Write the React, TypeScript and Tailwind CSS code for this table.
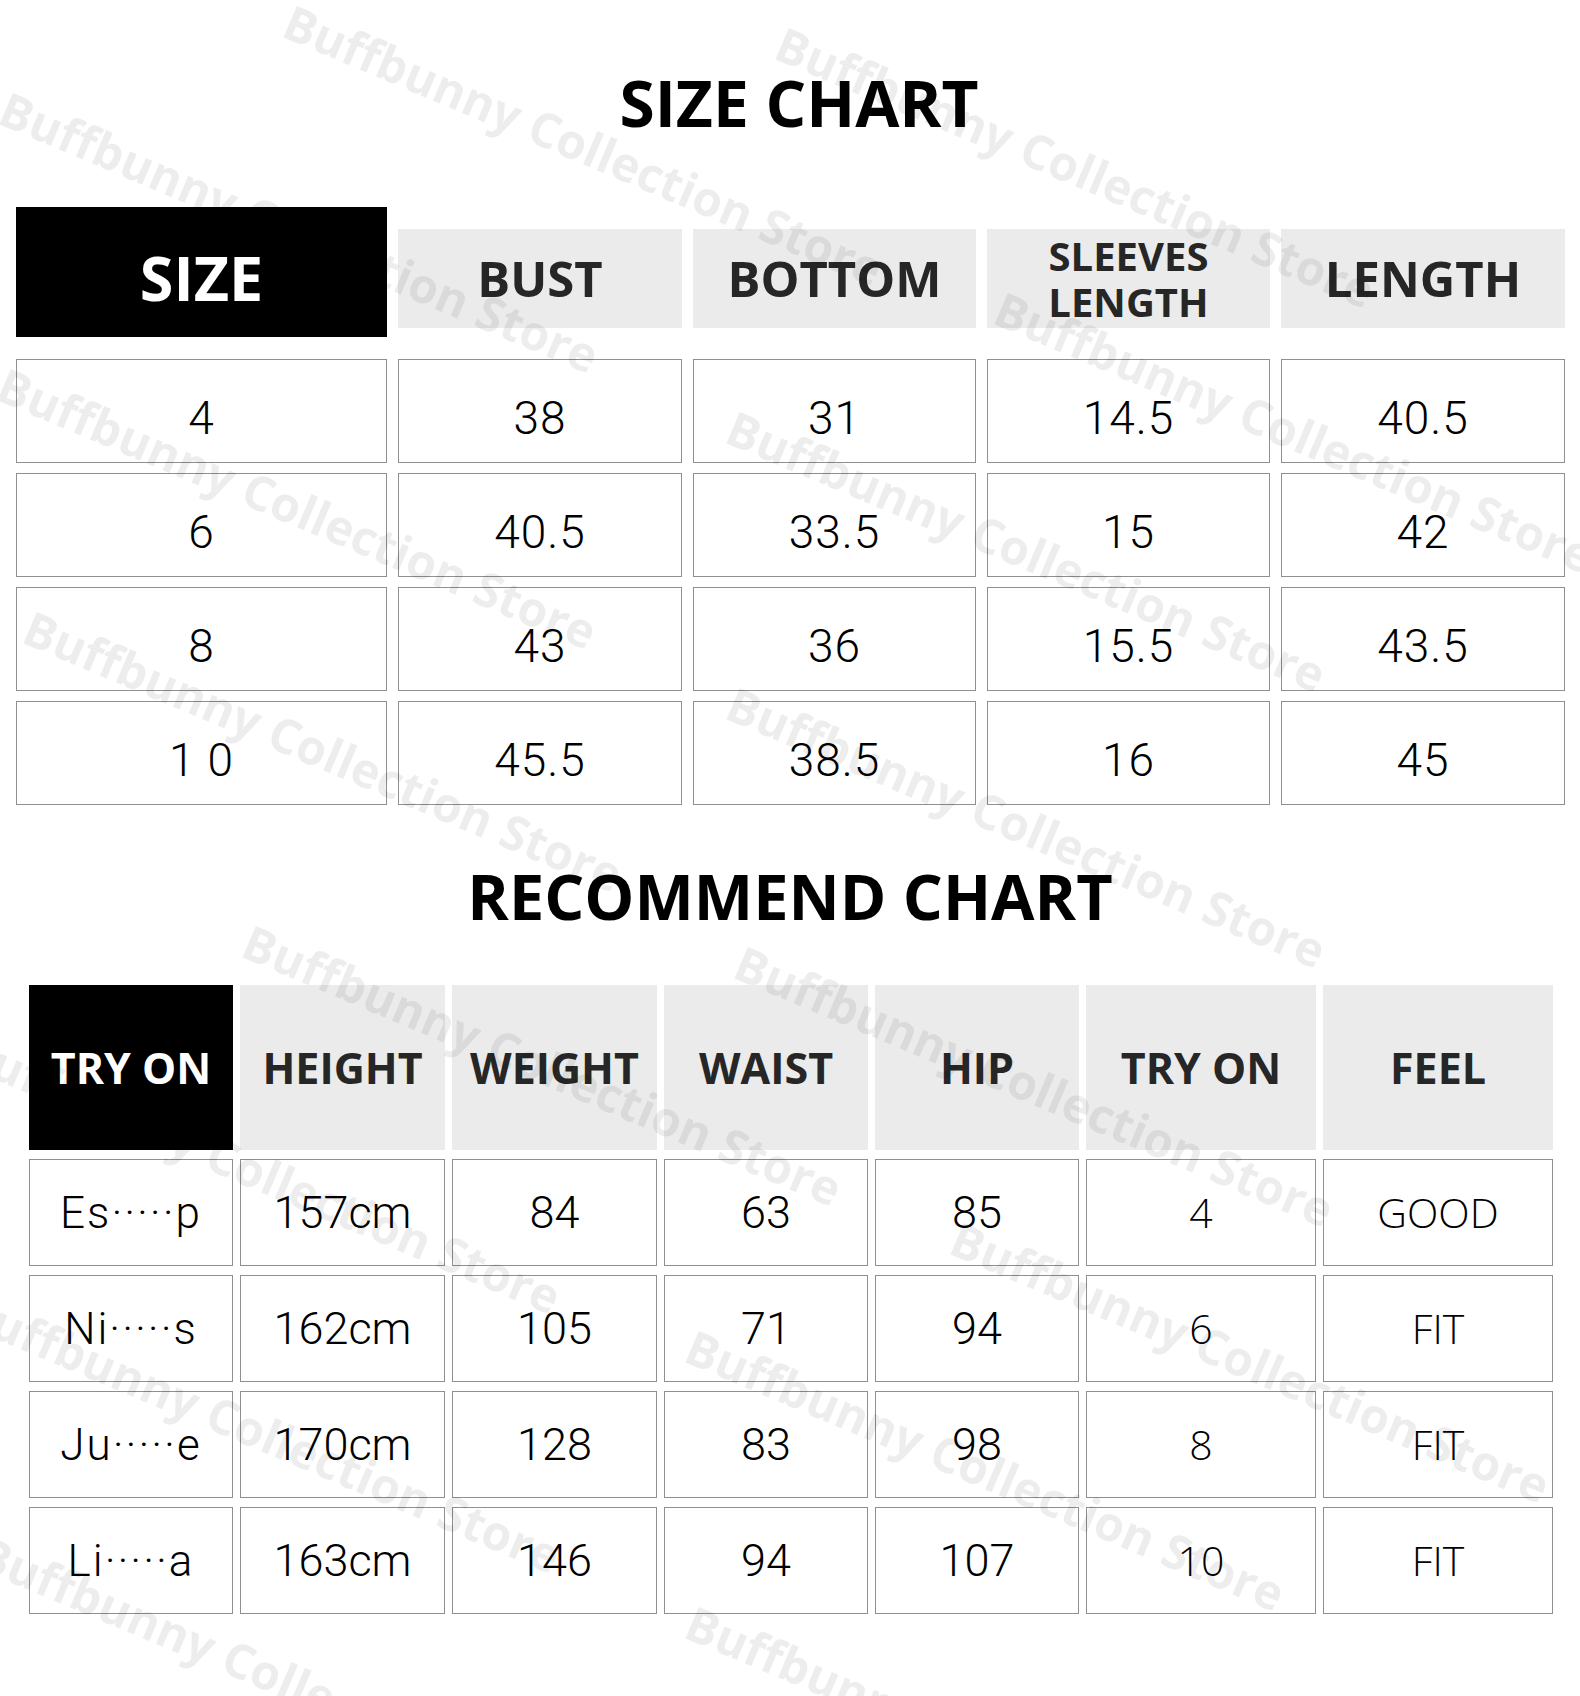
import React from "react";

const sizeHeaders = ["BUST", "BOTTOM", "SLEEVES LENGTH", "LENGTH"];

const sizeRows = [
  ["4", "38", "31", "14.5", "40.5"],
  ["6", "40.5", "33.5", "15", "42"],
  ["8", "43", "36", "15.5", "43.5"],
  ["10", "45.5", "38.5", "16", "45"],
];

const recHeaders = ["HEIGHT", "WEIGHT", "WAIST", "HIP", "TRY ON", "FEEL"];

const recRows = [
  { first: "Es", last: "p", height: "157cm", weight: "84", waist: "63", hip: "85", size: "4", feel: "GOOD" },
  { first: "Ni", last: "s", height: "162cm", weight: "105", waist: "71", hip: "94", size: "6", feel: "FIT" },
  { first: "Ju", last: "e", height: "170cm", weight: "128", waist: "83", hip: "98", size: "8", feel: "FIT" },
  { first: "Li", last: "a", height: "163cm", weight: "146", waist: "94", hip: "107", size: "10", feel: "FIT" },
];

// watermark positions, top-left of each rotated line
const marks = [
  "left-[12px] top-[84px]",
  "left-[296px] top-[-3px]",
  "left-[788px] top-[19px]",
  "left-[10px] top-[360px]",
  "left-[1007px] top-[284px]",
  "left-[739px] top-[403px]",
  "left-[36px] top-[603px]",
  "left-[739px] top-[679px]",
  "left-[255px] top-[917px]",
  "left-[747px] top-[938px]",
  "left-[-26px] top-[1025px]",
  "left-[963px] top-[1214px]",
  "left-[-26px] top-[1284px]",
  "left-[698px] top-[1322px]",
  "left-[-10px] top-[1528px]",
  "left-[698px] top-[1598px]",
];

const heading = "font-['Open_Sans',sans-serif] font-bold";
const body = "font-['Roboto','Liberation_Sans',Arial,sans-serif] font-light";

function SizeChart() {
  return (
    <section>
      <div className="flex justify-center pt-[71px] pl-[18px]">
        <h1 className={`${heading} text-[64px] leading-[64px] text-black`}>SIZE CHART</h1>
      </div>

      {/* header row */}
      <div className="ml-[16px] mt-[72px] grid w-[1549px] grid-cols-[371px_284px_283px_283px_284px] items-start gap-x-[11px]">
        <div className="flex h-[130px] items-center justify-center bg-black pt-[10px]">
          <span className={`${heading} text-[61px] leading-none text-white`}>SIZE</span>
        </div>
        {sizeHeaders.map((h) => (
          <div key={h} className="mt-[22px] flex h-[99px] items-center justify-center bg-[#ebebeb]">
            {h === "SLEEVES LENGTH" ? (
              <span className={`${heading} text-center text-[40px] leading-[46px] text-[#262626]`}>
                SLEEVES
                <br />
                LENGTH
              </span>
            ) : (
              <span className={`${heading} text-[49px] leading-none text-[#262626]`}>{h}</span>
            )}
          </div>
        ))}
      </div>

      {/* values */}
      <div className="ml-[16px] mt-[22px] grid w-[1549px] grid-cols-[371px_284px_283px_283px_284px] gap-x-[11px] gap-y-[10px]">
        {sizeRows.map((row, i) =>
          row.map((v, j) => (
            <div
              key={`${i}-${j}`}
              className="flex h-[104px] items-center justify-center border border-[#8f8f8f] bg-white pt-[14px]"
            >
              <span className={`${body} text-[46px] leading-none tracking-[1px] text-black`}>
                {j === 0 && v === "10" ? "1 0" : v}
              </span>
            </div>
          ))
        )}
      </div>
    </section>
  );
}

function RecCell({ children }: { children: React.ReactNode }) {
  return (
    <div className="flex h-[107px] items-center justify-center border border-[#8f8f8f] bg-white">
      {children}
    </div>
  );
}

function RecommendChart() {
  return (
    <section>
      <div className="mt-[59px] flex justify-center">
        <h2 className={`${heading} text-[63px] leading-[63px] text-black`}>RECOMMEND CHART</h2>
      </div>

      <div className="ml-[29px] mt-[58px] grid w-[1524px] grid-cols-[204px_205px_205px_204px_204px_230px_230px] gap-x-[7px]">
        <div className="flex h-[165px] items-center justify-center bg-black">
          <span className={`${heading} text-[43px] leading-none text-white`}>TRY ON</span>
        </div>
        {recHeaders.map((h) => (
          <div key={h} className="flex h-[165px] items-center justify-center bg-[#ebebeb]">
            <span className={`${heading} text-[43px] leading-none text-[#262626]`}>{h}</span>
          </div>
        ))}
      </div>

      <div className="ml-[29px] mt-[9px] grid w-[1524px] grid-cols-[204px_205px_205px_204px_204px_230px_230px] gap-x-[7px] gap-y-[9px]">
        {recRows.map((r) => (
          <React.Fragment key={r.first}>
            <RecCell>
              <span className={`${body} whitespace-nowrap text-[44px] leading-none tracking-[2px] text-black`}>
                {r.first + "·····" + r.last}
              </span>
            </RecCell>
            {[r.height, r.weight, r.waist, r.hip].map((v, k) => (
              <RecCell key={k}>
                <span className={`${body} text-[45px] leading-none text-black`}>{v}</span>
              </RecCell>
            ))}
            <RecCell>
              <span className="font-['Open_Sans',sans-serif] text-[41px] font-light leading-none text-black">
                {r.size}
              </span>
            </RecCell>
            <RecCell>
              <span className="font-['Open_Sans',sans-serif] text-[41px] font-light leading-none text-black">
                {r.feel}
              </span>
            </RecCell>
          </React.Fragment>
        ))}
      </div>
    </section>
  );
}

function Watermarks() {
  return (
    <div className="pointer-events-none absolute inset-0 z-10 overflow-hidden">
      {marks.map((m) => (
        <span
          key={m}
          className={`absolute ${m} origin-top-left rotate-[23deg] whitespace-nowrap font-['Open_Sans',sans-serif] text-[48px] font-bold leading-[48px] text-[#00000012]`}
        >
          Buffbunny Collection Store
        </span>
      ))}
    </div>
  );
}

export default function App() {
  return (
    <div className="relative h-[1696px] w-[1580px] overflow-hidden bg-white">
      <SizeChart />
      <RecommendChart />
      <Watermarks />
    </div>
  );
}
